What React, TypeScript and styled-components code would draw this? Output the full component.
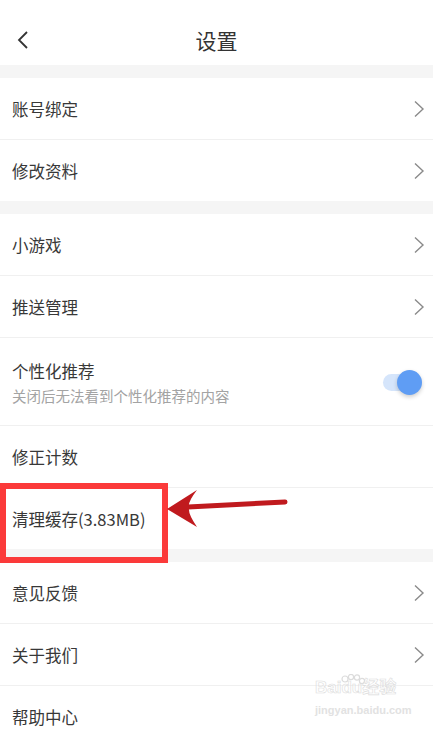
import React from "react";
import styled, { createGlobalStyle } from "styled-components";

const GlobalStyle = createGlobalStyle`
  html, body {
    margin: 0;
    padding: 0;
    background: #ffffff;
  }
  body {
    font-family: "Noto Sans CJK SC", "Noto Sans", sans-serif;
  }
`;

interface IRowProps {
  label: string;
  arrow?: boolean;
}

const Chevron: React.FC = () => (
  <svg width="12" height="18" viewBox="0 0 12 18">
    <path d="M2 1.5 L10 9 L2 16.5" fill="none" stroke="#8a8a8a" strokeWidth="1.4" />
  </svg>
);

const SettingRow: React.FC<IRowProps> = ({ label, arrow = true }) => (
  <Row>
    <Label>{label}</Label>
    {arrow && <Chevron />}
  </Row>
);

export default function App() {
  return (
    <>
      <GlobalStyle />
      <Page>
        <Header>
          <BackButton>
            <svg width="14" height="20" viewBox="0 0 14 20">
              <path d="M11 2 L3 10 L11 18" fill="none" stroke="#333" strokeWidth="1.8" />
            </svg>
          </BackButton>
          <Title>设置</Title>
        </Header>

        <Band />
        <Group>
          <SettingRow label="账号绑定" />
          <SettingRow label="修改资料" />
        </Group>

        <Band />
        <Group>
          <SettingRow label="小游戏" />
          <SettingRow label="推送管理" />
          <TallRow>
            <TextStack>
              <Label>个性化推荐</Label>
              <SubLabel>关闭后无法看到个性化推荐的内容</SubLabel>
            </TextStack>
            <Toggle>
              <Knob />
            </Toggle>
          </TallRow>
          <SettingRow label="修正计数" arrow={false} />
          <SettingRow label="清理缓存(3.83MB)" arrow={false} />
        </Group>

        <Band />
        <Group>
          <SettingRow label="意见反馈" />
          <SettingRow label="关于我们" />
          <SettingRow label="帮助中心" arrow={false} />
        </Group>

        {/* annotation overlay */}
        <Highlight />
        <ArrowMark width="140" height="50" viewBox="160 485 140 50">
          <line x1="188" y1="507" x2="285" y2="502" stroke="#c01a1e" strokeWidth="5" strokeLinecap="round" />
          <path d="M167 509 L197 490 Q187 503 189 508 Q188 514 197 527 Z" fill="#c01a1e" />
        </ArrowMark>

        <Watermark>
          <WmBrand>
            Bai
            <Paw>
              <svg width="28" height="18" viewBox="0 0 28 18">
                <circle cx="6" cy="5" r="3" fill="none" stroke="#dcdcdc" strokeWidth="1.2" />
                <circle cx="12" cy="3" r="2.6" fill="none" stroke="#dcdcdc" strokeWidth="1.2" />
                <circle cx="18" cy="3.5" r="2.6" fill="none" stroke="#dcdcdc" strokeWidth="1.2" />
                <circle cx="23" cy="7" r="2.6" fill="none" stroke="#dcdcdc" strokeWidth="1.2" />
              </svg>
            </Paw>
            du经验
          </WmBrand>
          <WmUrl>jingyan.baidu.com</WmUrl>
        </Watermark>
      </Page>
    </>
  );
}

const Page = styled.div`
  position: relative;
  width: 433px;
  height: 730px;
  overflow: hidden;
  background: #ffffff;
`;

const Header = styled.div`
  height: 65px;
  display: flex;
  align-items: center;
  justify-content: center;
  position: relative;
`;

const BackButton = styled.div`
  position: absolute;
  left: 16px;
  top: 30px;
  display: flex;
`;

const Title = styled.div`
  font-size: 21px;
  color: #333333;
  padding-top: 14px;
`;

const Band = styled.div`
  height: 13px;
  background: #f5f5f5;
`;

const Group = styled.div`
  display: flex;
  flex-direction: column;
  & > div + div {
    border-top: 1px solid #f0f0f0;
  }
`;

const Row = styled.div`
  height: 61px;
  display: flex;
  align-items: center;
  justify-content: space-between;
  padding: 0 8px 0 12px;
`;

const TallRow = styled(Row)`
  height: 87px;
  padding-right: 14px;
`;

const TextStack = styled.div`
  display: flex;
  flex-direction: column;
  gap: 4px;
  padding-top: 2px;
`;

const Label = styled.span`
  font-size: 16.5px;
  line-height: 22px;
  color: #383838;
`;

const SubLabel = styled.span`
  font-size: 14.5px;
  line-height: 20px;
  color: #a3a3a3;
`;

const Toggle = styled.div`
  position: relative;
  width: 36px;
  height: 17px;
  border-radius: 9px;
  background: #d5e5fb;
  margin-top: 2px;
`;

const Knob = styled.div`
  position: absolute;
  right: -3px;
  top: -4px;
  width: 25px;
  height: 25px;
  border-radius: 50%;
  background: #5f9df4;
  box-shadow: 0 2px 4px rgba(0, 0, 0, 0.2);
`;

const Highlight = styled.div`
  position: absolute;
  left: 0;
  top: 483px;
  width: 156px;
  height: 68px;
  border: 6px solid #fb3a3a;
`;

const ArrowMark = styled.svg`
  position: absolute;
  left: 160px;
  top: 485px;
`;

const Watermark = styled.div`
  position: absolute;
  left: 315px;
  top: 674px;
  display: flex;
  flex-direction: column;
  align-items: flex-start;
  font-family: "Liberation Sans", "Noto Sans CJK SC", sans-serif;
`;

const WmBrand = styled.div`
  display: flex;
  align-items: flex-end;
  font-size: 17px;
  font-weight: bold;
  line-height: 28px;
  -webkit-text-stroke: 0.6px #dcdcdc;
  color: rgba(255, 255, 255, 0.3);
`;

const Paw = styled.span`
  display: inline-flex;
  align-self: flex-start;
  margin: 0 -26px 0 -2px;
  width: 28px;
`;

const WmUrl = styled.div`
  font-size: 11px;
  font-weight: bold;
  color: #e2e2e2;
  margin-top: 2px;
`;
